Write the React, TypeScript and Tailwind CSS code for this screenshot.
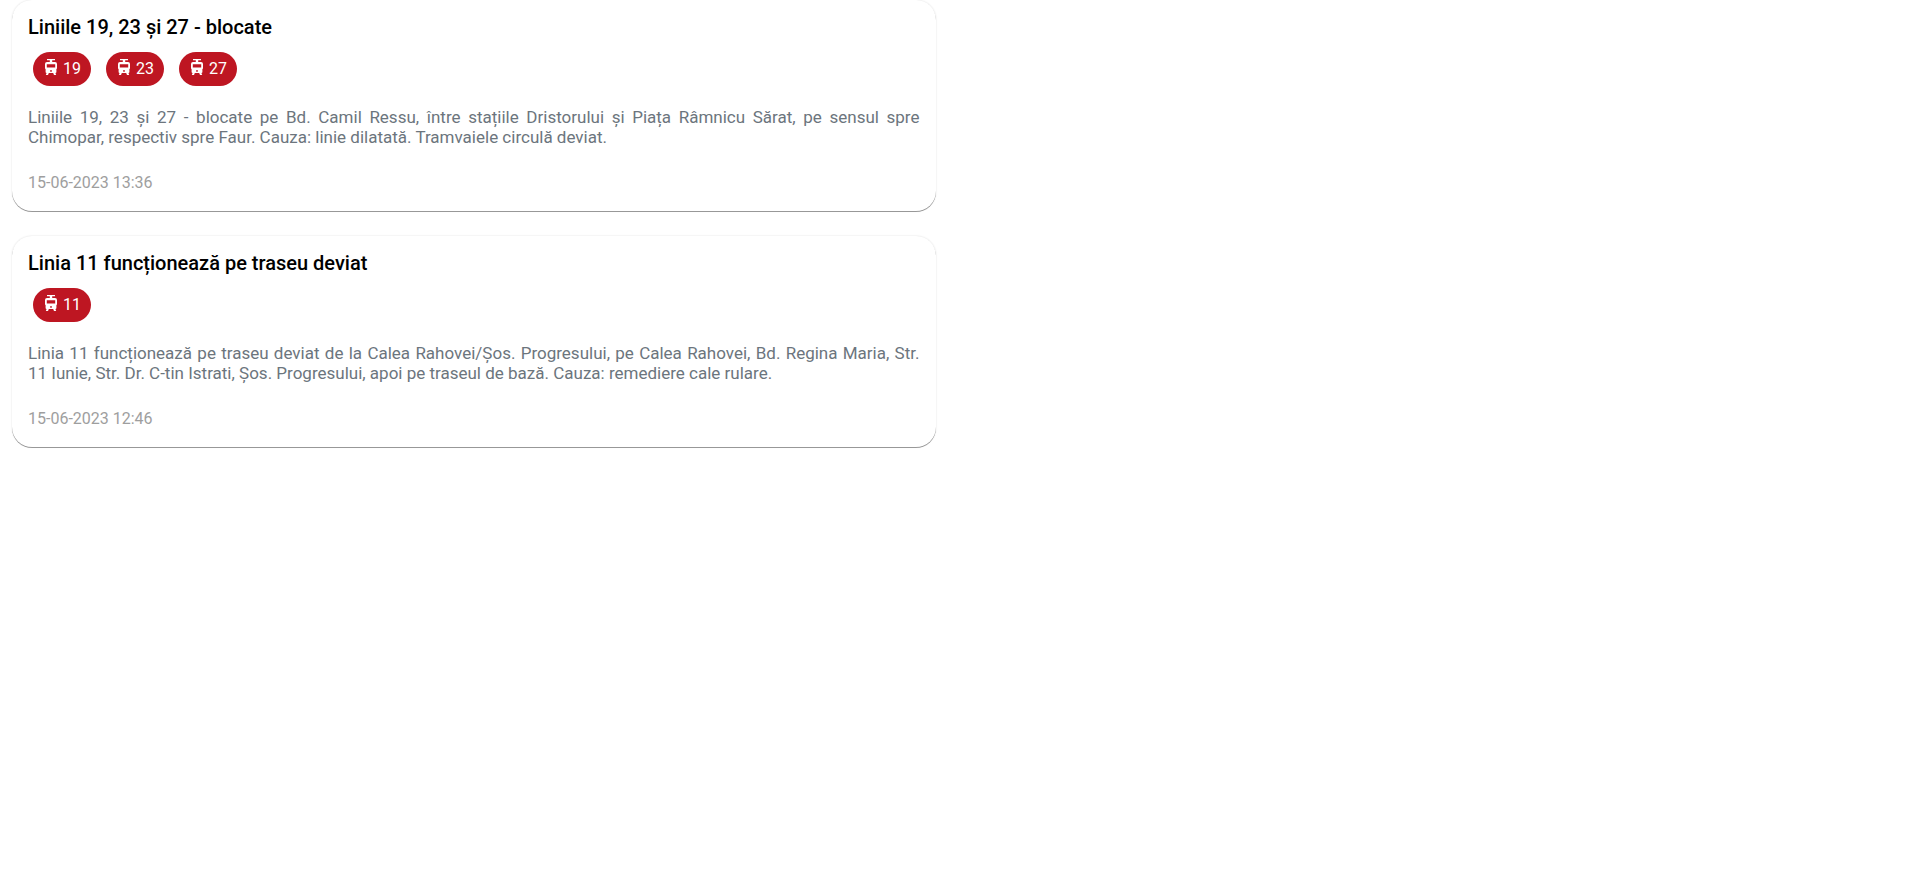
interface Alert {
  title: string
  lines: string[]
  description: string
  date: string
}

const alerts: Alert[] = [
  {
    title: 'Liniile 19, 23 și 27 - blocate',
    lines: ['19', '23', '27'],
    description:
      'Liniile 19, 23 și 27 - blocate pe Bd. Camil Ressu, între stațiile Dristorului și Piața Râmnicu Sărat, pe sensul spre Chimopar, respectiv spre Faur. Cauza: linie dilatată. Tramvaiele circulă deviat.',
    date: '15-06-2023 13:36',
  },
  {
    title: 'Linia 11 funcționează pe traseu deviat',
    lines: ['11'],
    description:
      'Linia 11 funcționează pe traseu deviat de la Calea Rahovei/Șos. Progresului, pe Calea Rahovei, Bd. Regina Maria, Str. 11 Iunie, Str. Dr. C-tin Istrati, Șos. Progresului, apoi pe traseul de bază. Cauza: remediere cale rulare.',
    date: '15-06-2023 12:46',
  },
]

function TramIcon() {
  return (
    <svg viewBox="0 0 12 16" className="mb-1 h-4 w-3" fill="currentColor" aria-hidden="true">
      <path
        fillRule="evenodd"
        d="M2 0h8v1.3H7.2V3H10a2 2 0 0 1 2 2V9.5L11.4 10V13a1 1 0 0 1-1 1L11.2 16H9L8.2 14H3.8L3 16H.8L1.6 14a1 1 0 0 1-1-1V10L0 9.5V5A2 2 0 0 1 2 3H4.8V1.3H2zM1.8 5.2v3.3h8.4V5.2zM6 11a.9.9 0 1 0 0 1.8.9.9 0 0 0 0-1.8z"
      />
    </svg>
  )
}

function LineBadge({ line }: { line: string }) {
  return (
    <li className="flex h-[34px] items-center gap-1.5 rounded-full bg-[#be1622] pr-2.5 pl-3 text-white">
      <TramIcon />
      <span>{line}</span>
    </li>
  )
}

function AlertCard({ alert }: { alert: Alert }) {
  return (
    <article className="rounded-[20px] bg-white px-4 pt-[15px] pb-4 shadow-[0_1px_0_rgba(0,0,0,0.38),0_0_2px_rgba(0,0,0,0.14)]">
      <h2 className="text-xl leading-6 font-medium text-black">{alert.title}</h2>
      <ul className="mt-[13px] ml-[5px] flex gap-[15px]">
        {alert.lines.map((line) => (
          <LineBadge key={line} line={line} />
        ))}
      </ul>
      <p className="mt-[21px] text-justify text-[17px] leading-5 text-[#6c757d]">{alert.description}</p>
      <time className="mt-6 block leading-6 text-[#9e9e9e]">{alert.date}</time>
    </article>
  )
}

export default function App() {
  return (
    <main className="flex w-1/2 flex-col gap-[25px] pr-[17px] pb-6 pl-3 font-['Roboto',sans-serif] text-base">
      {alerts.map((alert) => (
        <AlertCard key={alert.date} alert={alert} />
      ))}
    </main>
  )
}
